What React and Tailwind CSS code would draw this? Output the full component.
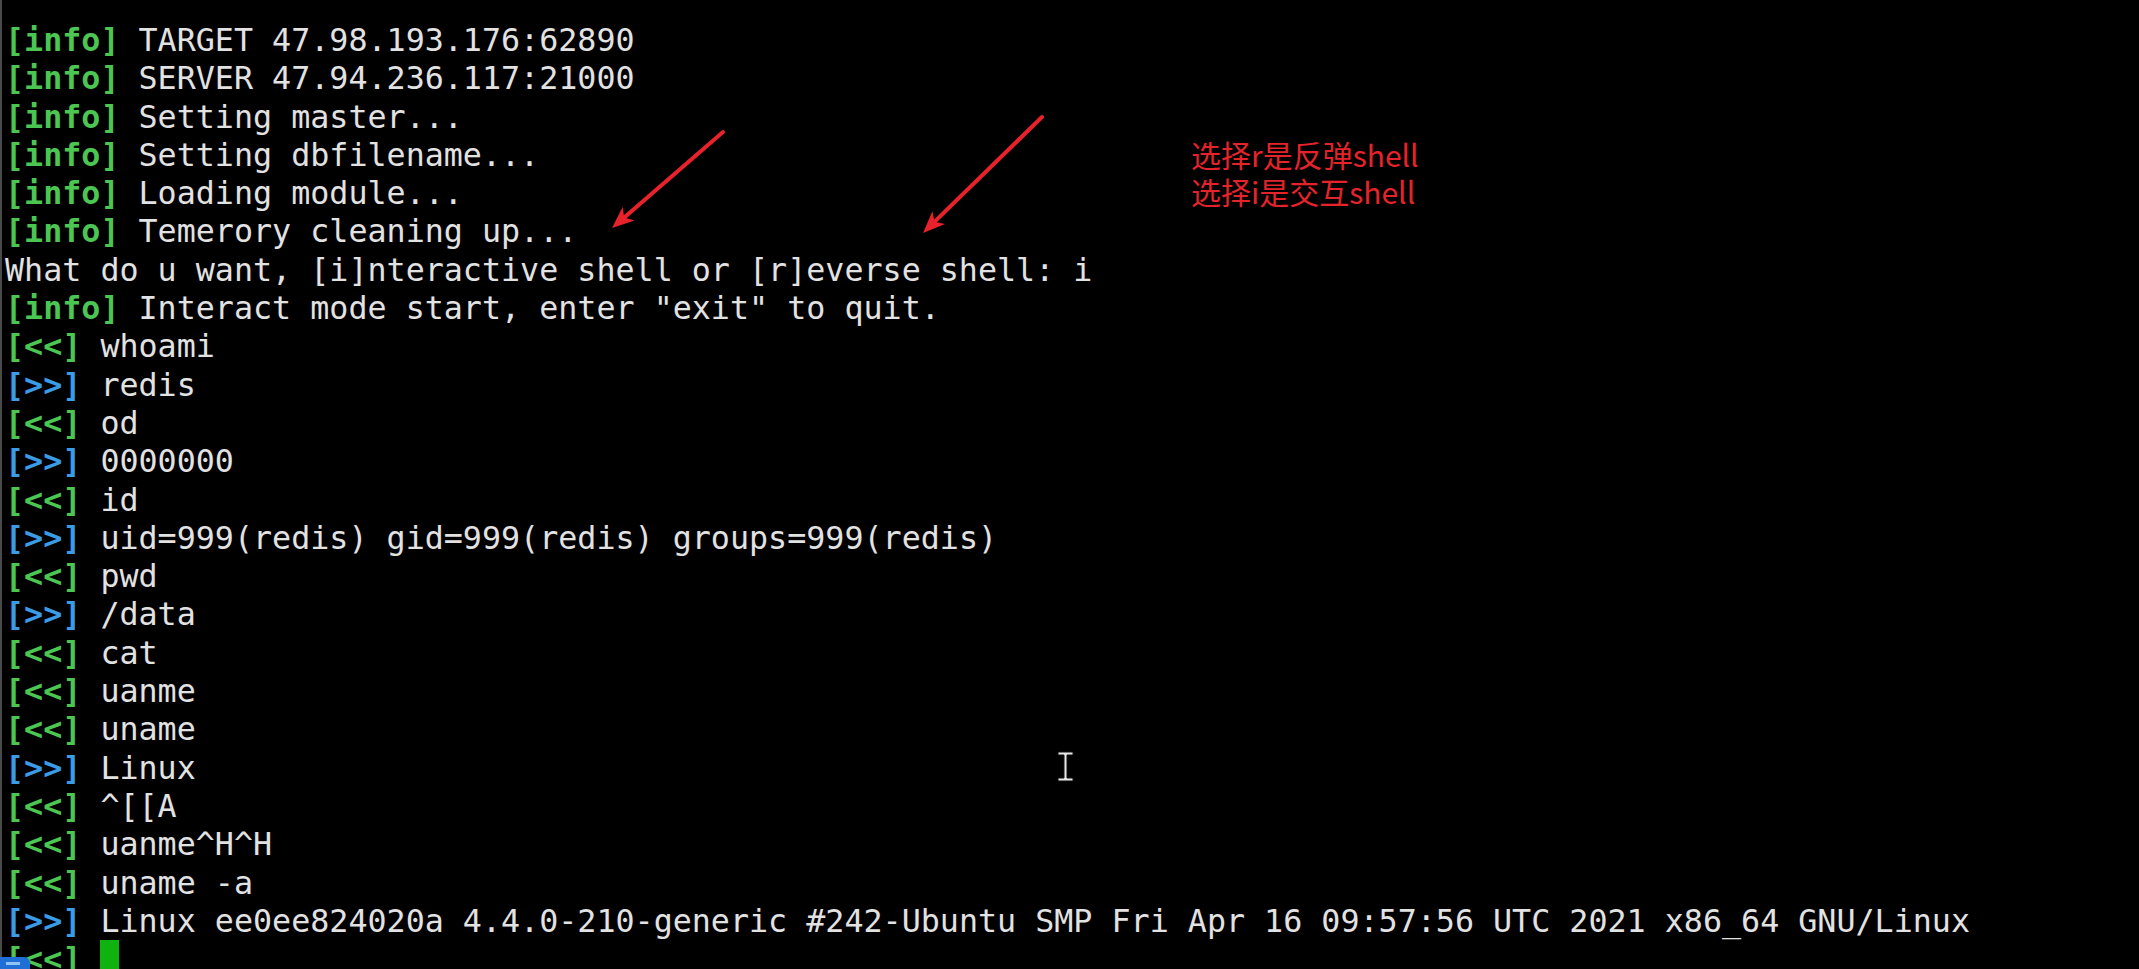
import React from 'react';

const lines = [
  ['info', 'TARGET 47.98.193.176:62890'],
  ['info', 'SERVER 47.94.236.117:21000'],
  ['info', 'Setting master...'],
  ['info', 'Setting dbfilename...'],
  ['info', 'Loading module...'],
  ['info', 'Temerory cleaning up...'],
  [null, 'What do u want, [i]nteractive shell or [r]everse shell: i'],
  ['info', 'Interact mode start, enter "exit" to quit.'],
  ['in', 'whoami'],
  ['out', 'redis'],
  ['in', 'od'],
  ['out', '0000000'],
  ['in', 'id'],
  ['out', 'uid=999(redis) gid=999(redis) groups=999(redis)'],
  ['in', 'pwd'],
  ['out', '/data'],
  ['in', 'cat'],
  ['in', 'uanme'],
  ['in', 'uname'],
  ['out', 'Linux'],
  ['in', '^[[A'],
  ['in', 'uanme^H^H'],
  ['in', 'uname -a'],
  ['out', 'Linux ee0ee824020a 4.4.0-210-generic #242-Ubuntu SMP Fri Apr 16 09:57:56 UTC 2021 x86_64 GNU/Linux'],
];

function Tag({ kind }) {
  if (kind === 'info') return <><span className="font-bold text-[#4cc653]">[info]</span> </>;
  if (kind === 'in') return <><span className="font-bold text-[#4cc653]">[&lt;&lt;]</span> </>;
  if (kind === 'out') return <><span className="font-bold text-[#3a9be6]">[&gt;&gt;]</span> </>;
  return null;
}

function Arrow({ x1, y1, x2, y2 }) {
  const dx = x2 - x1;
  const dy = y2 - y1;
  const len = Math.hypot(dx, dy);
  const ux = dx / len;
  const uy = dy / len;
  const hl = 22;
  const hw = 9;
  const bx = x2 - ux * hl;
  const by = y2 - uy * hl;
  const pts = `${x2},${y2} ${bx - uy * hw},${by + ux * hw} ${x2 - ux * (hl - 6)},${y2 - uy * (hl - 6)} ${bx + uy * hw},${by - ux * hw}`;
  return (
    <g>
      <line x1={x1} y1={y1} x2={x2 - ux * 12} y2={y2 - uy * 12} stroke="#e8222b" strokeWidth="4" strokeLinecap="round" />
      <polygon points={pts} fill="#e8222b" />
    </g>
  );
}

export default function App() {
  return (
    <div className="relative w-[2139px] h-[969px] overflow-hidden bg-black">
      {/* terminal output */}
      <div className="flex h-full">
        <div className="w-[2px] bg-[#4a4a4a] flex-shrink-0"></div>
        <div className="pl-[3px] pt-[21px] text-[31.7px] leading-[38.3px] text-[#e2e2e2] whitespace-pre font-['DejaVu_Sans_Mono',monospace]">
          {lines.map(([kind, text], i) => (
            <div key={i}>
              <Tag kind={kind} />
              {text}
            </div>
          ))}
          <div>
            <Tag kind="in" />
            <span className="inline-block align-top w-[19px] h-[38px] bg-[#10b20f]"></span>
          </div>
        </div>
      </div>

      {/* annotation */}
      <div className="absolute left-[1191px] top-[136px] text-[30px] leading-[37px] text-[#e5232b] font-['Noto_Sans_CJK_SC','Noto_Sans',sans-serif]">
        <div>选择r是反弹shell</div>
        <div>选择i是交互shell</div>
      </div>

      <svg className="absolute inset-0 pointer-events-none" width="2139" height="969">
        <Arrow x1={723} y1={132} x2={612} y2={228} />
        <Arrow x1={1042} y1={117} x2={923} y2={233} />
        {/* mouse I-beam */}
        <g stroke="#111" strokeWidth="1">
          <path d="M1058 752 h15 v3 h-6 v23 h6 v3 h-15 v-3 h6 v-23 h-6 z" fill="#e6e6e6" />
        </g>
      </svg>

      {/* taskbar corner */}
      <div className="absolute left-0 bottom-0 w-[30px] h-[12px] rounded-tr-[6px] bg-[#1f6fd6]">
        <div className="ml-[6px] mt-[5px] w-[14px] h-[3px] bg-[#8fc2f5]"></div>
      </div>
    </div>
  );
}
